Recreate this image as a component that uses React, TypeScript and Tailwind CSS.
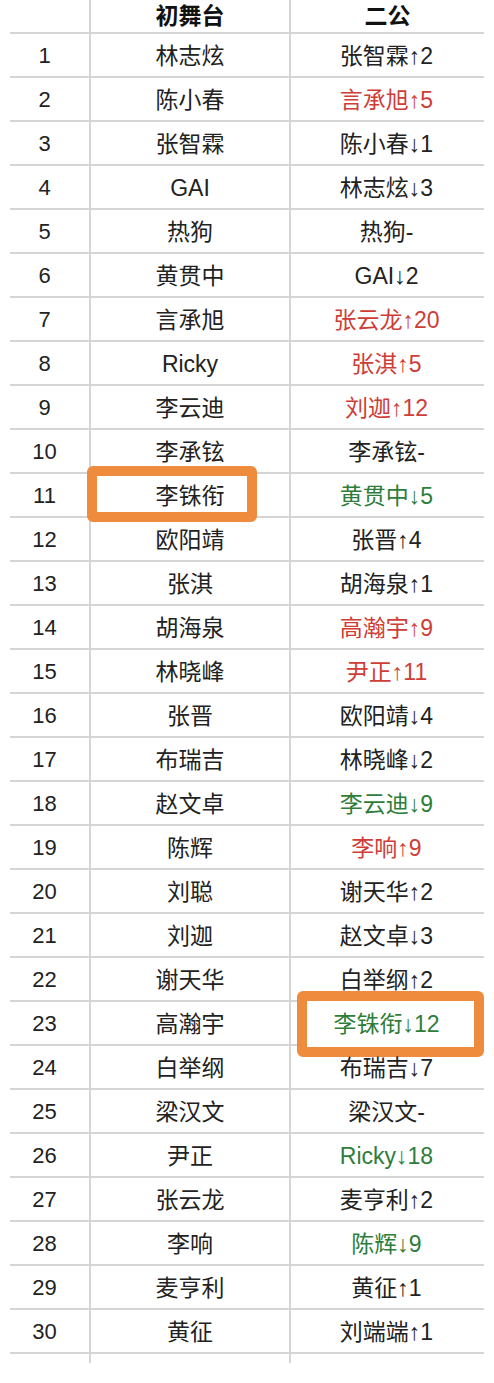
import React from "react";

type Row = [string, string, "k" | "r" | "g"];

const rows: Row[] = [
  ["林志炫", "张智霖↑2", "k"],
  ["陈小春", "言承旭↑5", "r"],
  ["张智霖", "陈小春↓1", "k"],
  ["GAI", "林志炫↓3", "k"],
  ["热狗", "热狗-", "k"],
  ["黄贯中", "GAI↓2", "k"],
  ["言承旭", "张云龙↑20", "r"],
  ["Ricky", "张淇↑5", "r"],
  ["李云迪", "刘迦↑12", "r"],
  ["李承铉", "李承铉-", "k"],
  ["李铢衔", "黄贯中↓5", "g"],
  ["欧阳靖", "张晋↑4", "k"],
  ["张淇", "胡海泉↑1", "k"],
  ["胡海泉", "高瀚宇↑9", "r"],
  ["林晓峰", "尹正↑11", "r"],
  ["张晋", "欧阳靖↓4", "k"],
  ["布瑞吉", "林晓峰↓2", "k"],
  ["赵文卓", "李云迪↓9", "g"],
  ["陈辉", "李响↑9", "r"],
  ["刘聪", "谢天华↑2", "k"],
  ["刘迦", "赵文卓↓3", "k"],
  ["谢天华", "白举纲↑2", "k"],
  ["高瀚宇", "李铢衔↓12", "g"],
  ["白举纲", "布瑞吉↓7", "k"],
  ["梁汉文", "梁汉文-", "k"],
  ["尹正", "Ricky↓18", "g"],
  ["张云龙", "麦亨利↑2", "k"],
  ["李响", "陈辉↓9", "g"],
  ["麦亨利", "黄征↑1", "k"],
  ["黄征", "刘端端↑1", "k"],
];

const colorClass = {
  k: "text-[#222222]",
  r: "text-[#cf3d37]",
  g: "text-[#2e7d3a]",
};

export default function App() {
  return (
    <div
      className="relative w-[494px] h-[1383px] bg-white overflow-hidden"
      style={{ fontFamily: '"Liberation Sans", "Noto Sans CJK SC", sans-serif' }}
    >
      <div className="ml-[10px] w-[474px] text-[23px] leading-none text-[#222222]">
        {/* header */}
        <div className="grid grid-cols-[79px_200px_195px] h-[34px] border-b-2 border-[#d5d5d5]">
          <div className="pr-[10px]" />
          <div className="border-l-2 border-[#d5d5d5] flex items-center justify-center font-bold text-[#111111]">
            <span className="relative z-20">初舞台</span>
          </div>
          <div className="border-l-2 border-[#d5d5d5] flex items-center justify-center font-bold text-[#111111]">
            <span className="relative z-20">二公</span>
          </div>
        </div>
        {rows.map((r, i) => (
          <div
            key={i}
            className="grid grid-cols-[79px_200px_195px] h-[44px] border-b-2 border-[#d5d5d5]"
          >
            <div className="pr-[10px] pt-[2px] flex items-center justify-center text-[22px]">
              <span className="relative z-20">{i + 1}</span>
            </div>
            <div className="border-l-2 border-[#d5d5d5] pt-[2px] flex items-center justify-center">
              <span className="relative z-20">{r[0]}</span>
            </div>
            <div className="border-l-2 border-[#d5d5d5] pt-[2px] flex items-center justify-center pr-[2px]">
              <span className={`relative z-20 ${colorClass[r[2]]}`}>{r[1]}</span>
            </div>
          </div>
        ))}
        <div className="grid grid-cols-[79px_200px_195px] h-[9px]">
          <div />
          <div className="border-l-2 border-[#d5d5d5]" />
          <div className="border-l-2 border-[#d5d5d5]" />
        </div>
      </div>

      {/* highlight boxes */}
      <div className="absolute left-[87px] top-[466px] w-[170px] h-[56px] border-[10px] border-[#ee8b3d] rounded-[6px] bg-white z-10" />
      <div className="absolute left-[297px] top-[991px] w-[187px] h-[66px] border-[10px] border-[#ee8b3d] rounded-[6px] bg-white z-10" />
    </div>
  );
}
